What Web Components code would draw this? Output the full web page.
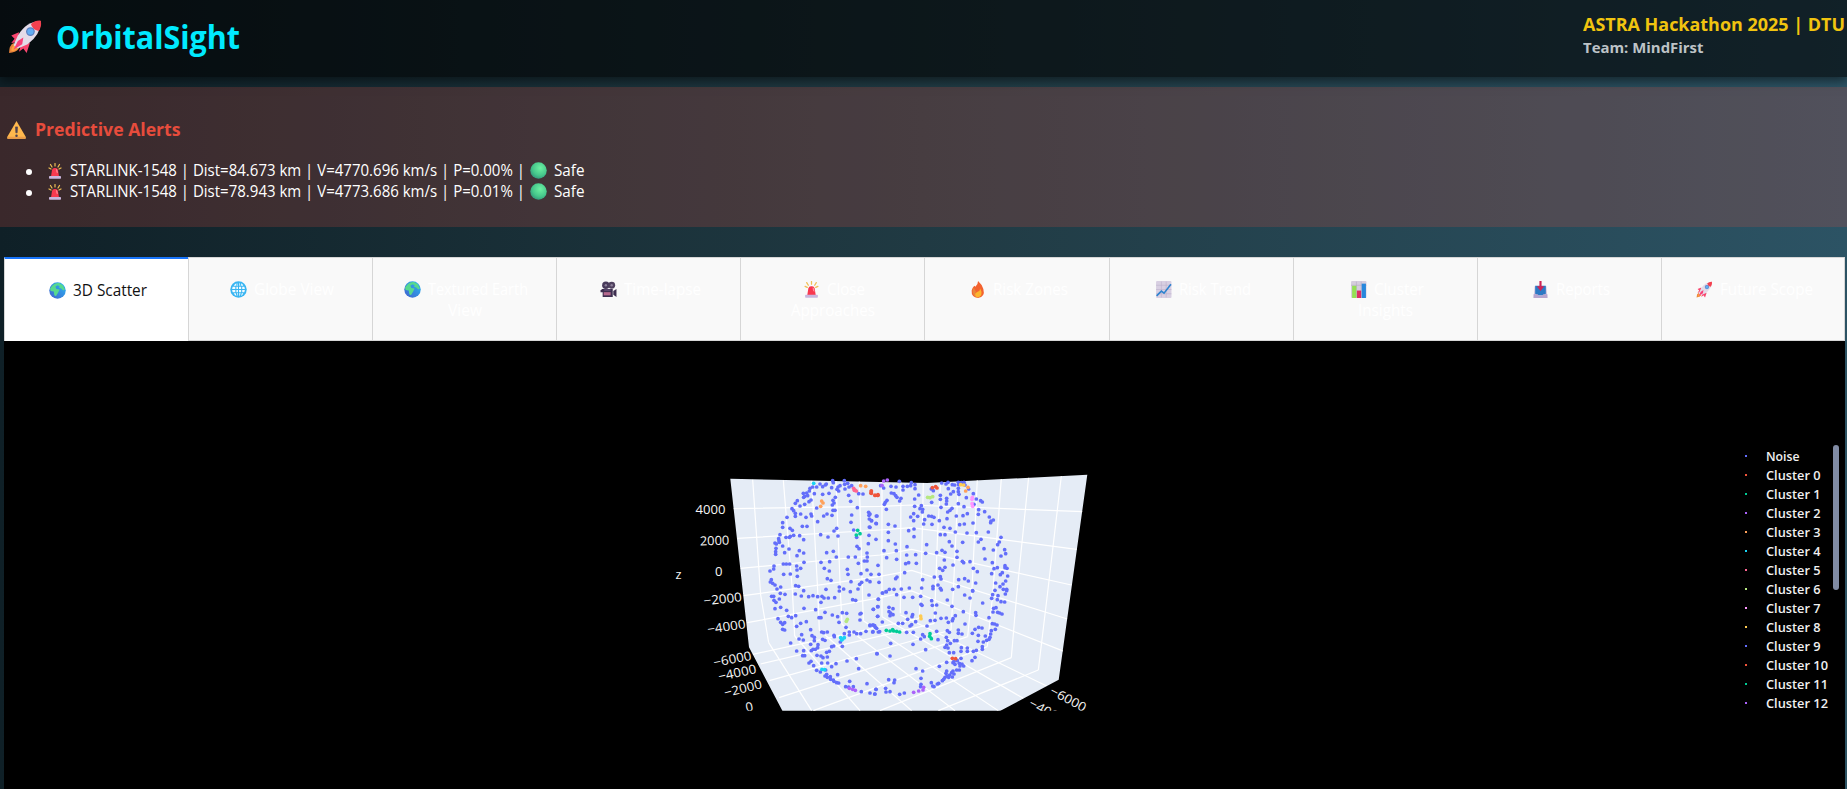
<!DOCTYPE html>
<html lang="en"><head><meta charset="utf-8"><title>OrbitalSight</title>
<style>
html,body{margin:0;height:789px;overflow:hidden}
body{background:linear-gradient(to right,#0f2027,#203a43,#2c5364);font-family:"Open Sans","Noto Sans",sans-serif;font-size:16px;color:#fff}
</style></head><body>
<orbital-app></orbital-app>
<script>
const make=(tag,init)=>customElements.define(tag,class extends HTMLElement{
  connectedCallback(){ if(this.shadowRoot) return; this.attachShadow({mode:'open'}); init(this,this.shadowRoot); }
});

/* Text squeezed to a given advance width */
make('fit-text',(el,root)=>{
  const w=+el.getAttribute('w');
  root.innerHTML=`<style>:host{display:inline-block;white-space:nowrap;width:${w}px}span{display:inline-block;transform-origin:0 50%}</style><span><slot></slot></span>`;
  const s=root.querySelector('span');
  const real=s.getBoundingClientRect().width;
  if(real) s.style.transform=`scaleX(${w/real})`;
});

const ICONS={
rocket:`<path d="M5 22q-4 2-4 9 6 0 9-4z" fill="#e8833a"/><path d="M3 29q0-4 3-5l3 3q-2 3-6 2z" fill="#ffa23e"/><path d="M10 12 3 15l3 3-3 4 6-1zM20 22l-3 9-3-4-4 3 2-7z" fill="#f8456e"/><path d="M29 2Q17 2 9 15l-4 9 4 3 9-4Q30 14 30 2z" fill="#e3dbe8"/><path d="M30 1.500q-5-.5-9 3 1 5 7 6.500 3-4 2-9.500z" fill="#f4404f"/><circle cx="20.500" cy="11.500" r="4" fill="#5a7ec0"/><circle cx="20.500" cy="11.500" r="2.900" fill="#62acf2"/><path d="M14 17 9 20l-4 8 8-5z" fill="#fa3f78"/>`,
warn:`<path d="M16 3 30 27q1 3-1 3H3q-2 0-1-3z" fill="#ffb84d"/><path d="M3 27h26l1 3H2z" fill="#ec9d4a"/><path d="M14.500 12h3l-.5 9h-2z" fill="#4d4050" stroke="#4d4050"/><circle cx="16" cy="25.500" r="1.900" fill="#4d4050"/>`,
siren:`<path d="M16 1v5M7 3l3 5M25 3l-3 5M4 10l4 2M28 10l-4 2" stroke="#f0bf55" stroke-width="2.400" stroke-linecap="round"/><path d="M8 27 10 14q1-4 5-4h2q4 0 5 4l2 13z" fill="#f8394f"/><path d="M18 12q3 0 3 4l1 4-3-1z" fill="#ff8d9a"/><rect x="4" y="26" width="24" height="5.500" rx="1.500" fill="#c9b6dd"/>`,
ball:`<defs><radialGradient id="g" cx=".6" cy=".35" r=".75"><stop offset="0" stop-color="#6df0a2"/><stop offset=".6" stop-color="#46c78b"/><stop offset="1" stop-color="#2f8c78"/></radialGradient></defs><circle cx="16" cy="16" r="15.500" fill="url(#g)"/>`,
earth:`<defs><linearGradient id="g" x1="1" x2="0" y2="1"><stop stop-color="#28b9f5"/><stop offset="1" stop-color="#4260cc"/></linearGradient></defs><circle cx="16" cy="16" r="15.500" fill="url(#g)"/><path d="M6 7q5-6 13-5l7 4 4 8-3 2-4-4-4-1 1-3-4-2-4 3 2 4 6 1-3 6-4 7-3-2-1-7-6-1-1-5z" fill="#57d98e"/>`,
globe:`<circle cx="16" cy="16" r="15.500" fill="#38b5f2"/><g fill="#f2fbff"><path d="M12 4v5H7q2-4 5-5zM14.500 3v6h-1.500zM17.500 3v6h2q-.5-4-2-6zM21 4v5h4q-1-4-4-5zM5 11h5v4H4zM12 11h3v4h-3zM17 11h4v4h-4zM23 11h4l1 4h-5zM4 17h6v4H5zM12 17h3v4h-3zM17 17h4v4h-4zM23 17h5l-1 4h-4zM7 23h4l1 5q-3-1-5-5zM13 23h2v6zM17 23h3l-2 6zM22 23h3q-1 3-4 5z"/></g>`,
camera:`<circle cx="11" cy="8" r="7" fill="#483a5b"/><circle cx="22" cy="8" r="6.500" fill="#50415f"/><circle cx="11" cy="8" r="2.300" fill="#8c7f99"/><circle cx="22" cy="8" r="2.300" fill="#8c7f99"/><path d="M3 15h21v15H5v-9H1v-4h2zM25 19l6-4v15l-6-4z" fill="#3e2f50"/><rect x="7" y="21" width="13" height="6" fill="#b66a8e"/><path d="M8 17h12" stroke="#6d5b80" stroke-width="2"/>`,
fire:`<path d="M17 0q8 7 10 15 4 15-10 17Q4 31 5 18q1-5 5-9l2 2Q17 7 17 0z" fill="#f3622f"/><path d="M9 12q-3 4-2 10 1 6 7 9-4-5-1-11z" fill="#e9853c"/><path d="m21 14q4 6 2 13-3 4-7 4-6-2-4-8l4-3q5-1 5-6z" fill="#fcb52d"/>`,
trend:`<rect x="2" y="0" width="29" height="32" rx="2" fill="#d8cfe2"/><path d="M2 8h29M2 16h29M2 24h29M12 1v30M21 1v30" stroke="#b9aecb"/><path d="m3 28 9-9 5 4L30 6" fill="none" stroke="#2c83cf" stroke-width="3"/>`,
bars:`<rect x="2" y="0" width="29" height="32" rx="2" fill="#d5cddd"/><path d="M2 8h29M12 1v30M21 1v30" stroke="#b0a5bf"/><path d="M4 9h8v23H4z" fill="#94df55"/><path d="M13 18h8v14h-8z" fill="#dc2d66"/><path d="M22 5h8v27h-8z" fill="#2787dc"/>`,
inbox:`<path d="M5 10h22l2 22H3z" fill="#cfc3df"/><path d="M6 9h20v15l-5 3H11l-5-3z" fill="#2c79c4"/><path d="M14 0h4v10h5l-7 9-7-9h5z" fill="#cf2456"/><path d="M3 25h8l2 3h6l2-3h8v7H3z" fill="#b6a5cf"/>`
};
make('emoji-icon',(el,root)=>{
  const s=el.getAttribute('size')||16;
  root.innerHTML=`<style>:host{display:inline-block;width:${s}px;height:${s}px;flex:none}svg{display:block}</style><svg width="${s}" height="${s}" viewBox="0 0 32 32">${ICONS[el.getAttribute('name')]}</svg>`;
});

make('app-header',(el,root)=>{
  root.innerHTML=`<style>
  :host{display:flex;justify-content:space-between;height:77px;box-sizing:border-box;background:rgba(0,0,0,.6);box-shadow:0 4px 10px rgba(0,0,0,.5);padding:0 2px 0 8px}
  .brand{display:flex;align-items:center;height:73px;font:700 32px/40px "Open Sans",sans-serif;color:#00eaff;gap:13px}
  .event{padding-top:12px;width:262px;font-weight:700}
  .t{font-size:18.500px;line-height:24px;color:#f1c40f}.s{font-size:15px;line-height:23px;color:#bdc3c7}
  fit-text{display:block}
  </style><div class="brand"><emoji-icon name="rocket" size="35"></emoji-icon><fit-text w="184">OrbitalSight</fit-text></div>
  <div class="event"><div class="t"><fit-text w="262">ASTRA Hackathon 2025 | DTU</fit-text></div><div class="s"><fit-text w="120.5">Team: MindFirst</fit-text></div></div>`;
});

make('alert-row',(el,root)=>{
  root.innerHTML=`<style>:host{display:flex;align-items:center;height:21px;line-height:21px;padding-left:26px}
  i{width:6px;height:6px;border-radius:50%;background:#fff;margin:2px 15px 0 0}.b{margin:0 7px 0 5px}</style>
  <i></i><emoji-icon name="siren" size="16"></emoji-icon><fit-text w="455" style="margin-left:7px"><slot></slot></fit-text><emoji-icon class="b" name="ball" size="17"></emoji-icon><fit-text w="30.5">Safe</fit-text>`;
});
make('alert-panel',(el,root)=>{
  root.innerHTML=`<style>:host{display:block;box-sizing:border-box;height:140px;margin-top:10px;padding-top:30px;background:rgba(231,76,60,.2)}
  h3{margin:0 0 19px;padding-left:6px;display:flex;align-items:center;gap:8px;height:24px;font:700 18px/24px "Open Sans",sans-serif;color:#e74c3c}</style>
  <h3><emoji-icon name="warn" size="21"></emoji-icon><fit-text w="145.5">Predictive Alerts</fit-text></h3><slot></slot>`;
});

make('nav-tab',(el,root)=>{
  const on=el.hasAttribute('active');
  const [l1,w1,l2,w2]=el.getAttribute('label').split(',');
  root.innerHTML=`<style>:host{display:block;flex:none;width:10%;box-sizing:border-box;height:84px;padding-top:21px;line-height:21px;
  ${on?'background:#fff;color:#111;border-left:1px solid #d6d6d6;border-top:2px solid #1975fa':'background:#f9f9f9;color:#fff;border:1px solid #d6d6d6;border-right:0'}}
  :host(:last-child){border-right:1px solid #d6d6d6}
  div{display:flex;justify-content:center;align-items:center;height:21px}emoji-icon{margin:0 7px 0 3px}</style>
  <div><emoji-icon name="${el.getAttribute('icon')}" size="17"></emoji-icon><fit-text w="${w1}">${l1}</fit-text></div>${l2?`<div><fit-text w="${w2}">${l2}</fit-text></div>`:''}`;
});
make('tab-bar',(el,root)=>{
  root.innerHTML=`<style>:host{display:flex;margin:30px 2px 0 4px;height:84px}</style>
  ${[['earth','3D Scatter,74'],['globe','Globe View,80'],['earth','Textured Earth,100,View,34'],['camera','Time-lapse,77'],['siren','Close,38,Approaches,84'],['fire','Risk Zones,75'],['trend','Risk Trend,72'],['bars','Cluster,50,Insights,55'],['inbox','Reports,54'],['rocket','Future Scope,93']].map(([i,l],k)=>`<nav-tab icon="${i}" label="${l}"${k?'':' active'}></nav-tab>`).join('')}`;
});

/* Marker positions, grouped by tile; each tile has its own origin at one third scale */
const TILES=[
[660,465,`480,57;499,57;518,47;520,53;553,47;554,58;563,55;450,70;458,66;470,66;488,65;496,60;515,68;534,66;540,62;555,72;567,66;575,62;448,78;430,85;440,84;434,94;443,92;431,97;463,86;488,88;507,85;536,78;531,73;566,91;596,86;609,87;412,107;406,115;420,123;434,118;447,110;453,105;396,131;401,137;406,145;406,154;422,147;438,157;453,147;455,153;470,129;519,106;522,114;517,120;526,97;519,136;525,136;491,153;501,147;516,151;473,170;381,157;368,173;368,187;427,184;441,184;390,190;397,196;360,209;356,221;357,227;345,234;349,237;358,232;368,243;348,250;347,260;347,268;378,217;391,214;388,217;401,211;419,212;431,224;387,252;374,263;411,272;418,257;431,264;482,209;504,216;522,198;530,190;534,213;500,263;520,259;529,276;572,109;592,128;575,150;573,172;581,195;590,217;591,244;597,251;586,276;565,276;626,142;627,151;628,162;635,167;649,153;649,176;628,186;627,211;648,223;625,236;621,264;622,276;595,295;613,288;621,288;432,292;370,297;379,297;389,297;342,303;341,312;330,318;410,303;411,315;422,310;412,334;371,328;391,327;483,292;509,290;493,310;508,318;562,313;564,328;603,326;621,315;502,341;513,346;538,366;551,372;573,350;594,372;599,358;605,352;621,345;630,350;334,344;331,351;338,355;345,360;351,372;362,366;407,362;416,364;498,373`],
[870,465,`32,62;41,69;88,49;63,64;78,66;99,64;99,75;112,64;122,62;124,53;135,59;135,71;64,84;72,86;77,92;81,97;93,100;89,108;51,106;46,112;43,118;49,133;134,102;146,90;134,124;154,122;150,131;158,133;157,141;131,146;122,156;143,154;131,167;164,164;161,177;176,153;185,154;192,157;186,178;208,167;185,112;190,77;184,72;211,91;211,103;213,127;230,100;230,108;229,117;215,54;228,57;234,52;235,71;247,59;242,87;250,80;254,60;265,52;266,59;265,70;265,80;267,88;282,52;274,53;285,60;296,72;289,98;310,86;319,102;332,107;337,111;312,118;282,125;265,116;246,130;240,136;233,141;259,153;231,161;279,152;292,146;326,134;325,148;344,140;358,156;370,165;363,168;362,173;309,174;283,177;269,179;222,187;240,190;211,209;225,209;256,201;291,204;319,203;355,201;393,217;388,231;383,239;333,223;325,231;278,232;238,230;246,243;342,251;370,255;404,254;407,266;393,273;345,282;216,256;200,263;225,262;261,259;261,277;167,265;170,239;111,245;132,215;132,192;116,197;75,183;55,178;55,202;55,227;76,237;79,257;42,257;50,278;80,283;110,270;137,269;116,293;107,296;139,295;104,323;81,336;77,341;24,301;3,328;27,328;27,352;37,384;49,380;58,373;72,373;94,372;118,369;158,344;155,369;193,336;189,364;189,371;204,360;211,335;213,342;211,370;214,375;223,285;209,310;218,316;225,307;249,300;277,289;281,293;300,290;310,310;322,320;367,293;372,311;382,308;405,302;405,308;411,310;365,326;397,323;391,329;413,333;407,348;399,357;390,365;400,373;410,373;377,354;375,376;317,354;308,378;284,341;295,348;266,344;265,365;248,373;21,153;18,175;4,167;0,147;0,187`],
[660,590,`361,10;375,13;335,19;341,19;342,31;348,37;358,27;406,12;424,18;446,20;459,17;473,20;486,19;492,24;505,24;524,23;483,37;431,2;538,3;571,5;578,29;587,31;627,15;345,56;362,52;380,61;432,55;467,59;477,83;483,83;495,67;517,75;533,80;547,68;560,70;537,97;558,112;600,72;603,70;600,90;640,58;653,50;653,79;655,28;354,86;362,97;368,103;374,98;368,118;374,120;385,79;395,83;407,77;410,109;422,100;439,95;452,119;485,126;491,128;502,126;488,148;495,151;456,137;463,142;463,152;425,134;417,147;430,150;392,159;410,183;431,182;452,163;474,164;473,173;466,178;459,178;454,182;428,197;434,197;471,196;483,198;489,203;502,201;500,187;508,184;515,170;521,168;522,136;523,140;541,156;547,169;553,131;568,126;568,135;582,126;590,131;602,131;618,124;630,107;638,105;644,107;650,115;638,126;655,126;447,219;453,214;461,227;485,219;503,219;515,230;528,221;470,241;481,246;497,240;495,258;502,262;511,260;512,268;520,270;522,274;530,278;536,279;500,253;533,254;569,274;557,290;566,291;580,290;621,281;648,298;630,309;645,312;604,305;561,213;589,206;596,236;651,191`],
[870,590,`25,27;38,9;48,5;80,14;102,22;128,22;152,19;153,43;156,46;185,32;187,46;200,45;232,30;246,49;196,69;284,15;300,24;308,2;338,39;368,14;384,17;365,25;382,29;393,35;404,36;410,2;406,12;10,58;24,50;57,52;69,56;57,65;62,69;60,77;69,74;23,79;37,96;108,68;128,74;126,80;85,100;98,100;113,88;137,95;120,108;125,104;171,108;181,92;195,91;213,85;229,84;256,77;249,86;235,97;247,92;280,65;317,68;318,76;285,102;326,112;336,114;315,118;307,130;378,53;371,55;369,66;383,67;389,69;396,72;357,83;367,101;374,102;381,105;376,118;364,122;362,132;360,142;357,148;346,138;325,136;324,154;340,156;350,151;337,170;337,178;319,181;310,184;315,202;306,212;292,174;292,184;274,173;273,184;261,152;253,152;265,120;265,130;276,132;238,127;232,122;229,142;233,152;241,160;230,165;225,172;234,174;200,124;204,149;163,140;152,147;158,134;130,127;110,127;129,163;62,160;167,179;21,191;60,198;138,236;158,243;208,229;230,217;238,188;251,188;273,205;252,214;249,218;262,212;268,220;276,222;281,228;270,228;255,223;230,243;228,250;239,255;249,243;252,252;260,240;268,240;245,248;247,261;236,262;225,262;231,258;217,272;221,268;206,280;202,282;188,288;192,290;184,278;153,265;153,283;152,290;103,309;89,313;47,295;48,306;60,305;56,269;74,270;72,278;18,298;14,312;9,125;29,125;0,105;10,105;16,112`]];
const CLUSTERS=[
[0,'#19d3f3','461,55'],[0,'#ff6692','581,70;585,75;589,78;583,76'],[0,'#ffa15a','602,62;617,64;485,108;489,114;482,124'],[0,'#ef553b','634,78;633,84;645,91;654,91'],[0,'#00cc96','593,196;589,210;600,206'],
[1,'#ef553b','4,78;4,85;15,91;22,91;24,89;187,68;197,65;201,69'],[1,'#ab63fa','41,48;52,45;36,61'],[1,'#b6e880','173,97;180,98;188,95'],[1,'#ff97ff','307,97;306,103;306,116;308,124'],[1,'#fecb52','272,59;281,60'],[1,'#ffa15a','287,78;294,67'],
[2,'#b6e880','562,88;559,94'],[2,'#19d3f3','542,143;548,147;553,143;545,150;486,238;494,239'],[2,'#ab63fa','568,295;578,298;586,301'],
[3,'#00cc96','49,121;60,123;68,119;71,123;80,124;89,126;180,131;179,139;184,146'],[3,'#fecb52','152,78;153,86'],[3,'#ef553b','247,205;257,206'],[3,'#ab63fa','131,307;146,303;159,300;161,292']];
/* Grid polylines, given in one-third pixels relative to (660,465) */
const GRID=['278,44 302,390 326,533','370,46 397,375 404,513','455,47 473,375 478,495','528,48 541,375 546,478','598,49 607,375 610,467','666,50 666,455','723,50 721,445',
'790,53 783,380 777,460','842,50 833,200 823,475','895,47 880,380 873,495','952,43 935,390 923,515','1024,40 998,390 982,545','1106,36 1070,390 1054,578','1204,33 1162,390 1135,615',
'220,131 660,124 755,120 1270,140','232,220 660,195 755,188 1250,253','242,310 660,270 755,253 1234,360','251,392 660,334 755,316 1222,462','262,473 660,398 755,378 1212,559'];
const FLOOR=['-82,163 417,55','-58,192 463,70','-32,242 513,90','-3,293 563,110','100,332 622,140','300,332 694,173','475,332 775,210','-34,128 95,332','44,108 240,332','118,90 395,332','186,73 525,332','250,62 655,332','306,50 730,295','361,45 800,258'];
const WALL='M730.3 478.700 927 483 1087.300 474.700 1058.700 679.700 1000 711H782.500L749 647.300Z';
const dots=s=>s.split(';').map(p=>{const [x,y]=p.split(',');return `<circle cx="${x}" cy="${y}" r="5.600"/>`}).join('');
const tile=(x,y,inner,extra='')=>`<g transform="translate(${x} ${y}) scale(.33333)" ${extra}>${inner}</g>`;
const LABELS=[[695.5,513.7,0,30,'4000'],[700,545.5,-2,29.5,'2000'],[715,575.5,0,7.5,'0'],[675.5,579,0,6,'z'],[704,605.3,-6,38.5,'−2000'],[708,633.8,-8.500,38.5,'−4000'],[714.3,667,-11,38.5,'−6000'],[719.3,681,-12,38.5,'−4000'],[725.3,697.3,-14,38.5,'−2000'],[746.5,712,-12,7.5,'0'],[1049,693.8,28,39,'−6000'],[1028,706,28,39,'−4000']];
make('scatter-plot',(el,root)=>{
  root.innerHTML=`<style>:host{display:block;grid-area:1/1}svg{display:block}text{font-family:"Open Sans","Noto Sans",sans-serif;font-size:12.500px;fill:#f4f4f4}</style>
  <svg width="1841" height="448" viewBox="4 341 1841 448"><clipPath id="c"><rect x="600" y="400" width="600" height="310.700"/></clipPath><clipPath id="w"><path d="${WALL}"/></clipPath><g clip-path="url(#c)">
  <path d="${WALL}" fill="#e5ecf6"/><g clip-path="url(#w)">
  ${tile(660,465,GRID.map(p=>`<polyline points="${p}"/>`).join(''),'fill="none" stroke="#fff" stroke-width="3.600"')}
  ${tile(780,600,FLOOR.map(p=>`<polyline points="${p}"/>`).join(''),'fill="none" stroke="#fff" stroke-width="3.600"')}</g>
  ${TILES.map(([x,y,p])=>tile(x,y,dots(p),'fill="#636efa"')).join('')}
  ${CLUSTERS.map(([t,c,p])=>tile(TILES[t][0],TILES[t][1],dots(p),`fill="${c}"`)).join('')}
  ${LABELS.map(([x,y,r,w,t])=>`<text transform="translate(${x} ${y}) rotate(${r})" textLength="${w}" lengthAdjust="spacingAndGlyphs">${t}</text>`).join('')}
  </g></svg>`;
});
make('plot-legend',(el,root)=>{
  const cols=['#636efa','#ef553b','#00cc96','#ab63fa','#ffa15a','#19d3f3','#ff6692','#b6e880','#ff97ff','#fecb52'];
  root.innerHTML=`<style>:host{grid-area:1/1;justify-self:end;display:flex;margin-top:104px;width:100px;height:270px;position:relative}
  ul{list-style:none;margin:1.500px 0 0;padding:0;flex:1}li{display:flex;align-items:center;height:19px;line-height:19px;font-size:12px;font-weight:600;color:#f0f0f0}
  i{width:2px;height:2px;margin-right:18.500px}b{width:6px;height:145px;border-radius:3px;background:#808ba4;margin-right:6px}</style>
  <ul>${['Noise',...Array.from({length:13},(_,i)=>'Cluster '+i)].map((t,i)=>`<li><i style="background:${cols[i%10]}"></i><fit-text w="${i?(i>10?62:54.5):33.5}">${t}</fit-text></li>`).join('')}</ul><b></b>`;
});
make('plot-panel',(el,root)=>{
  root.innerHTML=`<style>:host{display:grid;margin:0 2px 0 4px;height:448px;background:#000}</style><scatter-plot></scatter-plot><plot-legend></plot-legend>`;
});
make('orbital-app',(el,root)=>{
  root.innerHTML=`<style>:host{display:block}</style><app-header></app-header>
  <alert-panel><alert-row>STARLINK-1548 | Dist=84.673 km | V=4770.696 km/s | P=0.00% |</alert-row><alert-row>STARLINK-1548 | Dist=78.943 km | V=4773.686 km/s | P=0.01% |</alert-row></alert-panel>
  <tab-bar></tab-bar><plot-panel></plot-panel>`;
});
</script></body></html>
